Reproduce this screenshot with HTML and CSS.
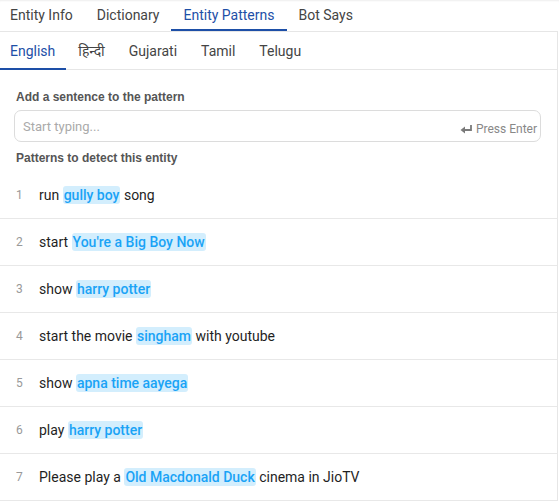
FILE: index.html
```html
<!DOCTYPE html>
<html>
<head>
<meta charset="utf-8">
<link rel="stylesheet" href="styles.css">
</head>
<body>
<div class="page">
  <nav class="tabs">
    <div class="tab">Entity Info</div>
    <div class="tab">Dictionary</div>
    <div class="tab active">Entity Patterns</div>
    <div class="tab">Bot Says</div>
  </nav>
  <div class="panel">
    <nav class="langs">
      <div class="lang active">English</div>
      <div class="lang">हिन्दी</div>
      <div class="lang">Gujarati</div>
      <div class="lang">Tamil</div>
      <div class="lang">Telugu</div>
    </nav>
    <div class="form">
      <div class="label">Add a sentence to the pattern</div>
      <div class="input">
        <span class="placeholder">Start typing...</span>
        <span class="hint"><svg class="enter" width="13" height="10" viewBox="0 0 13 10"><path d="M11 1 V6 H4" fill="none" stroke="#7a7a7a" stroke-width="1.8"/><path d="M0.5 6 L5 2.5 V9.5 Z" fill="#7a7a7a"/></svg>Press Enter</span>
      </div>
      <div class="label second">Patterns to detect this entity</div>
    </div>
    <ol class="list">
      <li class="row"><span class="num">1</span><span class="text">run <mark class="hl">gully boy</mark> song</span></li>
      <li class="row"><span class="num">2</span><span class="text">start <mark class="hl">You're a Big Boy Now</mark></span></li>
      <li class="row"><span class="num">3</span><span class="text">show <mark class="hl">harry potter</mark></span></li>
      <li class="row"><span class="num">4</span><span class="text">start the movie <mark class="hl">singham</mark> with youtube</span></li>
      <li class="row"><span class="num">5</span><span class="text">show <mark class="hl">apna time aayega</mark></span></li>
      <li class="row"><span class="num">6</span><span class="text">play <mark class="hl">harry potter</mark></span></li>
      <li class="row"><span class="num">7</span><span class="text">Please play a <mark class="hl">Old Macdonald Duck</mark> cinema in JioTV</span></li>
    </ol>
  </div>
</div>
</body>
</html>
```

FILE: styles.css
```css
* { box-sizing: border-box; }
html, body { margin: 0; padding: 0; background: #fff; }
body {
  font-family: Roboto, "Noto Sans", "Noto Sans Devanagari", sans-serif;
  color: #222;
  width: 559px;
  height: 503px;
  overflow: hidden;
}
.page {
  width: 559px;
  box-shadow: inset 0 2px 2px -1px rgba(0,0,0,0.07);
}
.tabs {
  display: flex;
  height: 31px;
  margin-left: -2px;
}
.tab {
  padding: 1px 12px 0;
  font-size: 14px;
  line-height: 28px;
  color: #444;
  border-bottom: 2px solid transparent;
}
.tab.active {
  color: #1d4fa7;
  border-bottom-color: #1d4fa7;
}
.panel {
  width: 558px;
  border-top: 1px solid #e6e6e6;
  border-right: 1px solid #e6e6e6;
}
.langs {
  display: flex;
  height: 38px;
  border-bottom: 1px solid #e6e6e6;
}
.lang {
  padding: 2px 12px 0;
  font-size: 14px;
  line-height: 34px;
  color: #444;
  border-bottom: 2px solid transparent;
  margin-bottom: -1px;
}
.lang:first-child { padding-left: 10px; padding-right: 11px; }
.lang.active {
  color: #1d4fa7;
  border-bottom-color: #1d4fa7;
}
.form {
  padding: 20px 16px 0 14px;
}
.label {
  font-family: "Liberation Sans", Arial, sans-serif;
  font-size: 12px;
  font-weight: 700;
  color: #555;
  line-height: 14px;
  padding-left: 2px;
}
.label.second { margin-top: 9px; }
.input {
  margin-top: 6px;
  height: 32px;
  border: 1px solid #dcdcdc;
  border-radius: 7px;
  display: flex;
  justify-content: space-between;
  align-items: center;
  padding: 0 3px 0 8px;
}
.placeholder {
  font-size: 13px;
  color: #aaa;
}
.hint {
  font-size: 12px;
  color: #888;
  display: flex;
  align-items: center;
  gap: 3px;
  margin-top: 6px;
}
.enter { display: block; }
.list {
  list-style: none;
  margin: 7px 0 0 0;
  padding: 0;
}
.row {
  display: flex;
  align-items: center;
  height: 47px;
  border-bottom: 1px solid #e8e8e8;
  padding-left: 16px;
}
.num {
  width: 23px;
  font-size: 12px;
  color: #999;
}
.text {
  font-size: 14px;
  color: #1f1f1f;
}
.hl {
  background: #d3eefd;
  color: #1aa3f6;
  font-weight: 500;
  border-radius: 3px;
  padding: 1px 1px;
}
```
